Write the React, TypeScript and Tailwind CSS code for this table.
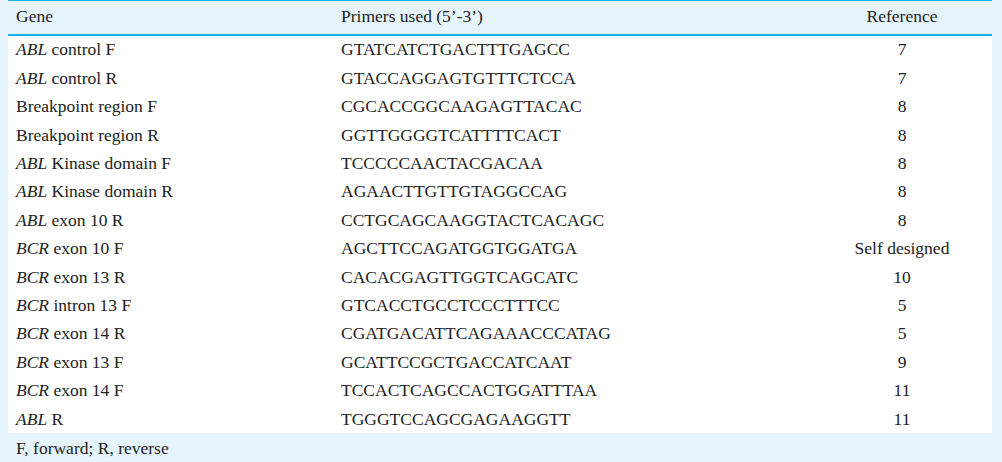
const rows: { italic?: string; rest: string; primer: string; ref: string }[] = [
  { italic: "ABL", rest: " control F", primer: "GTATCATCTGACTTTGAGCC", ref: "7" },
  { italic: "ABL", rest: " control R", primer: "GTACCAGGAGTGTTTCTCCA", ref: "7" },
  { rest: "Breakpoint region F", primer: "CGCACCGGCAAGAGTTACAC", ref: "8" },
  { rest: "Breakpoint region R", primer: "GGTTGGGGTCATTTTCACT", ref: "8" },
  { italic: "ABL", rest: " Kinase domain F", primer: "TCCCCCAACTACGACAA", ref: "8" },
  { italic: "ABL", rest: " Kinase domain R", primer: "AGAACTTGTTGTAGGCCAG", ref: "8" },
  { italic: "ABL", rest: " exon 10 R", primer: "CCTGCAGCAAGGTACTCACAGC", ref: "8" },
  { italic: "BCR", rest: " exon 10 F", primer: "AGCTTCCAGATGGTGGATGA", ref: "Self designed" },
  { italic: "BCR", rest: " exon 13 R", primer: "CACACGAGTTGGTCAGCATC", ref: "10" },
  { italic: "BCR", rest: " intron 13 F", primer: "GTCACCTGCCTCCCTTTCC", ref: "5" },
  { italic: "BCR", rest: " exon 14 R", primer: "CGATGACATTCAGAAACCCATAG", ref: "5" },
  { italic: "BCR", rest: " exon 13 F", primer: "GCATTCCGCTGACCATCAAT", ref: "9" },
  { italic: "BCR", rest: " exon 14 F", primer: "TCCACTCAGCCACTGGATTTAA", ref: "11" },
  { italic: "ABL", rest: " R", primer: "TGGGTCCAGCGAGAAGGTT", ref: "11" }
];

const App = () => {
  return (
    <div className="w-[1002px] h-[462px] bg-[#e6f5fc] pl-2 pr-[10px] text-[#222] text-[17.5px] leading-none font-['Liberation_Serif','Times_New_Roman','DejaVu_Serif',serif]">
      <div className="border-t border-[#14b4ea]">
        <div className="flex items-center h-[35px] border-b-2 border-[#14b4ea] pb-[2px]">
          <div className="w-[325px] pl-2">Gene</div>
          <div className="w-[479px] pl-2">Primers used (5’-3’)</div>
          <div className="flex-1 text-center">Reference</div>
        </div>
        <div className="bg-white flex flex-col">
          {rows.map((row) => (
            <div key={row.rest + row.primer} className="flex items-center h-[28.4px]">
              <div className="w-[325px] pl-2">
                {row.italic && <i>{row.italic}</i>}
                {row.rest}
              </div>
              <div className="w-[479px] pl-2">{row.primer}</div>
              <div className="flex-1 text-center">{row.ref}</div>
            </div>
          ))}
        </div>
        <div className="flex items-center h-[29px] pl-2 pt-[1px]">F, forward; R, reverse</div>
      </div>
    </div>
  );
};

export default App;
